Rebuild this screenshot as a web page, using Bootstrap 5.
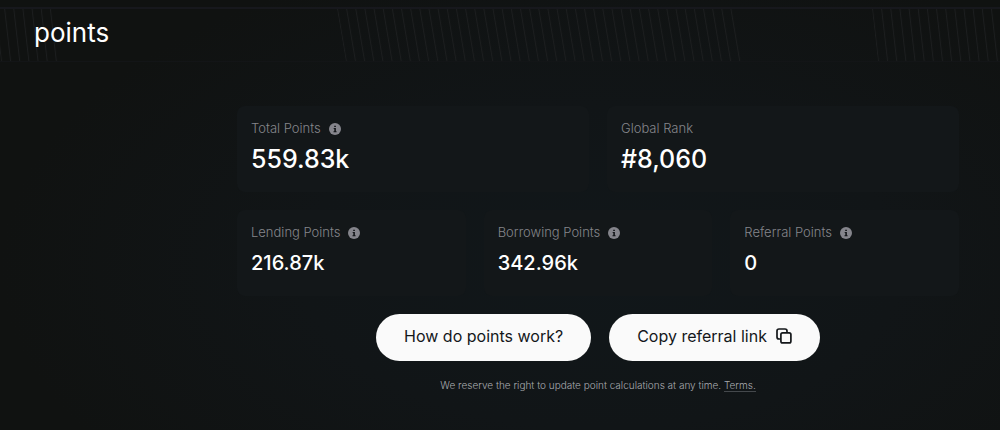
<!DOCTYPE html>
<html lang="en">
<head>
<meta charset="utf-8">
<meta name="viewport" content="width=device-width, initial-scale=1">
<title>Points</title>
<link href="https://cdn.jsdelivr.net/npm/bootstrap@5.3.0/dist/css/bootstrap.min.css" rel="stylesheet">
<style>
  body { font-family: Inter, "Liberation Sans", sans-serif; background: #101211; color: #fff; }
  .page { background: radial-gradient(ellipse 60% 75% at 60% 62%, #11171a 0%, #111517 50%, #101211 100%); }
  .page-head { margin-top: 7px; height: 55px; border-top: 2px solid #17181d; border-bottom: 1px solid #131517; padding: 0 34px; }
  .page-head h1 { font-size: 26px; line-height: 32px; padding-top: 8px; font-weight: 400; }
  .stripes { inset: 0; }
  .points-main { padding: 44px 41px 32px 23.7%; }
  .stack { gap: 18px; }
  .stat { background: #131719; border-radius: 8px; padding: 12px 14px; height: 86px; }
  .stat dt { font-size: 13px; line-height: 20px; font-weight: 300; color: #85868b; gap: 8px; }
  .stat dd { font-size: 25px; line-height: 36px; font-weight: 500; padding-top: 3px; }
  .stat-minor dd { font-size: 20px; }
  .info { border: 0; background: none; line-height: 1; padding: 2px 0 0; }
  .pill { --bs-btn-bg: #fafafa; --bs-btn-color: #14171a; --bs-btn-hover-bg: #e8e8e8; --bs-btn-hover-color: #14171a; --bs-btn-font-size: 16px; --bs-btn-padding-x: 27px; height: 47px; gap: 9px; padding-bottom: 9px; }
  .note { font-size: 10px; line-height: 16px; font-weight: 300; color: #a9abb0; }
  .note a { color: inherit; text-decoration: none; border-bottom: 1px solid #44484c; }
</style>
</head>
<body>
<svg class="d-none" aria-hidden="true">
  <symbol id="info-icon" viewBox="0 0 12 12"><circle cx="6" cy="6" r="6" fill="#85858c"/><path d="M5.2 2.7h1.7v1.4H5.2zM4.7 5h2.2v3.3h.7v1H4.5v-1h.8V6h-.6z" fill="#14171a"/></symbol>
</svg>
<div class="page min-vh-100 overflow-hidden">
  <header class="page-head position-relative">
    <svg class="stripes position-absolute w-100 h-100" viewBox="0 0 1000 52" preserveAspectRatio="xMidYMid slice" aria-hidden="true">
      <defs>
        <pattern id="bars" width="9.15" height="52" patternUnits="userSpaceOnUse"><path d="M.5 0V52" stroke="#1c1e1f"/></pattern>
      </defs>
      <g fill="url(#bars)">
        <g transform="translate(-5 0) skewX(6.5)"><rect width="58" height="52"/></g>
        <g transform="translate(337 0) skewX(9.6)"><rect width="397" height="52"/></g>
        <g transform="translate(872 0) skewX(6.5)"><rect width="140" height="52"/></g>
      </g>
    </svg>
    <h1 class="position-relative m-0">points</h1>
  </header>
  <main class="points-main">
    <div class="d-flex flex-column stack">
      <dl class="d-flex stack m-0">
        <div class="stat col">
          <dt class="d-flex align-items-center">Total Points <button class="info" type="button" aria-label="About total points"><svg class="d-block" width="12" height="12"><use href="#info-icon"/></svg></button></dt>
          <dd class="m-0">559.83k</dd>
        </div>
        <div class="stat col">
          <dt>Global Rank</dt>
          <dd class="m-0">#8,060</dd>
        </div>
      </dl>
      <dl class="d-flex stack m-0">
        <div class="stat stat-minor col">
          <dt class="d-flex align-items-center">Lending Points <button class="info" type="button" aria-label="About lending points"><svg class="d-block" width="12" height="12"><use href="#info-icon"/></svg></button></dt>
          <dd class="m-0">216.87k</dd>
        </div>
        <div class="stat stat-minor col">
          <dt class="d-flex align-items-center">Borrowing Points <button class="info" type="button" aria-label="About borrowing points"><svg class="d-block" width="12" height="12"><use href="#info-icon"/></svg></button></dt>
          <dd class="m-0">342.96k</dd>
        </div>
        <div class="stat stat-minor col">
          <dt class="d-flex align-items-center">Referral Points <button class="info" type="button" aria-label="About referral points"><svg class="d-block" width="12" height="12"><use href="#info-icon"/></svg></button></dt>
          <dd class="m-0">0</dd>
        </div>
      </dl>
      <div class="d-flex justify-content-center stack">
        <button class="btn pill rounded-pill" type="button">How do points work?</button>
        <button class="btn pill rounded-pill d-flex align-items-center" type="button">Copy referral link
          <svg width="16" height="16" viewBox="0 0 16 16" fill="none" stroke="#14171a" stroke-width="1.7" aria-hidden="true"><rect x="4.9" y="4.9" width="10" height="10" rx="1.7"/><path d="M4.5 11H3Q1 11 1 9V3Q1 1 3 1H9Q11 1 11 3V4.5"/></svg>
        </button>
      </div>
    </div>
    <p class="note text-center mb-0 mt-3">We reserve the right to update point calculations at any time. <a href="#terms">Terms.</a></p>
  </main>
</div>
<script src="https://cdn.jsdelivr.net/npm/bootstrap@5.3.0/dist/js/bootstrap.bundle.min.js"></script>
</body>
</html>
